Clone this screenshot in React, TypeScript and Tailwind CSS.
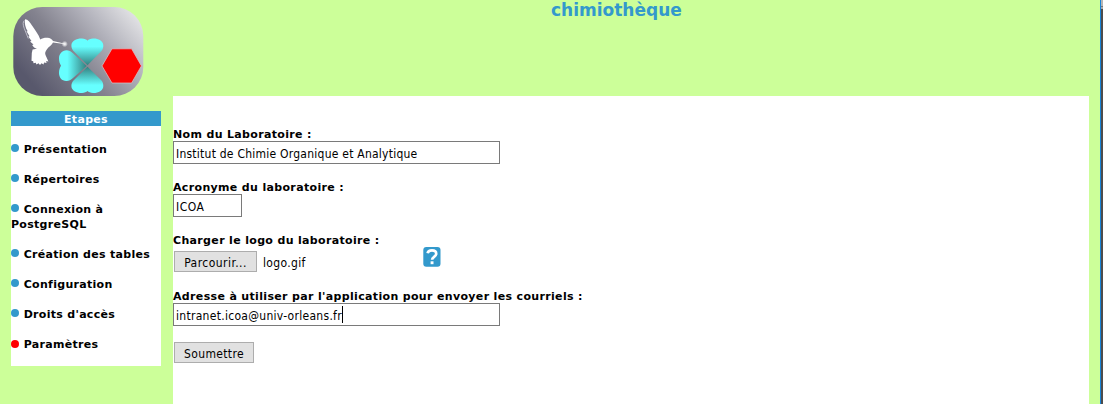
import React from "react";

const steps = [
  { label: "Présentation" },
  { label: "Répertoires" },
  { label: "Connexion à PostgreSQL" },
  { label: "Création des tables" },
  { label: "Configuration" },
  { label: "Droits d'accès" },
  { label: "Paramètres", active: true },
];

function Logo() {
  return (
    <svg className="block h-[91px] w-[132px]" viewBox="12 6 132 91">
      <defs>
        <linearGradient id="plate" gradientUnits="userSpaceOnUse" x1="36" y1="88" x2="128" y2="8">
          <stop offset="0" stopColor="#58586c" />
          <stop offset="0.4" stopColor="#84838f" />
          <stop offset="0.72" stopColor="#b4b4bd" />
          <stop offset="1" stopColor="#e0e0e3" />
        </linearGradient>
        <linearGradient id="leafTop" x1="0" y1="0" x2="0" y2="1">
          <stop offset="0.3" stopColor="#66ffff" />
          <stop offset="1" stopColor="#33807f" />
        </linearGradient>
        <linearGradient id="leafLeft" x1="0" y1="0" x2="1" y2="0">
          <stop offset="0.3" stopColor="#66ffff" />
          <stop offset="1" stopColor="#33807f" />
        </linearGradient>
        <linearGradient id="leafBottom" x1="0" y1="1" x2="0" y2="0">
          <stop offset="0.3" stopColor="#66ffff" />
          <stop offset="1" stopColor="#33807f" />
        </linearGradient>
        <radialGradient id="spark">
          <stop offset="0" stopColor="#fff" />
          <stop offset="0.4" stopColor="#fff" stopOpacity="0.7" />
          <stop offset="1" stopColor="#fff" stopOpacity="0" />
        </radialGradient>
      </defs>
      <rect x="13.300" y="7" width="130" height="89" rx="29" fill="url(#plate)" />
      <path
        d="M25 19.200C28 19.500 30 22 32 25.500 34.500 29.500 38.500 34 40.300 39.500 42 38.200 44.500 37.700 47.500 37.800 50 37.900 52 39.300 53 41L64 43.400 64 44 53 42.600C52 45 48.500 47 46.800 49.500 45.300 51.500 44.800 53 45.500 55L48.400 61.500 46.200 61 46.500 63 44 62.400 43.600 64.500 41.500 63.200 40 65 38.500 63.200 36.500 64.500 35.700 62.800 33.500 63.300 33.200 61.300 31.500 60.700 31.800 53 32.600 49.500 37 48.700C35 48.200 33 46.700 32.200 44.900L33.500 44.500 30 41.500 31.500 41 28.300 36.500 29.500 36.200 26.500 31.300 27.700 31.300C25.300 27.500 24.300 23 25 19.200Z"
        fill="#fff"
      />
      <path d="M24.300 20.500c-1.500 1.500-1.500 4 0 8l4 10" fill="none" stroke="#d0d0da" strokeWidth=".8" />
      <circle cx="64.700" cy="44" r="3.200" fill="url(#spark)" />
      <path d="M87.500 65.300L74 51.500C72.300 49.700 71.400 48 71.400 45.500 71.400 40.500 77 38.300 82 38.500c2.500.1 4.500.9 5.500 2.200 1-1.300 3-2.100 5.500-2.200 5-.2 10.300 2 10.300 7 0 2.500-.6 4.200-2.300 6Z" fill="url(#leafTop)" />
      <path d="M86.700 66L73 53.200C71 51.300 69 50.300 66.500 50.300c-4.500 0-7.500 3.700-7.500 8.200 0 3 .8 5 2 7.300-1.200 2-2 4.200-2 7.200 0 4.500 3 8.200 7.500 8 2.500-.1 4.500-1 6.500-2.900Z" fill="url(#leafLeft)" />
      <path d="M87.500 66.700L74 80C72.300 81.700 71.400 83.400 71.400 85.900 71.400 90.700 77 93.100 82 92.900c2.500-.1 4.500-.8 5.500-1.900 1 1.100 3 1.800 5.500 1.900 5 .2 10.300-2.200 10.300-7 0-2.500-.6-4.200-2.300-5.900Z" fill="url(#leafBottom)" />
      <path d="M112 48.800h19.600l9.800 17.100-9.800 17.100H112l-10-17.100Z" fill="#f00" stroke="#d8c5ca" strokeWidth=".7" />
    </svg>
  );
}

function HelpIcon() {
  return (
    <svg className="ml-[117px] h-[20px] w-[18px] shrink-0 self-start" viewBox="0 0 18 20">
      <rect x=".3" width="17.200" height="19.700" rx="3" fill="#3399cc" />
      <path d="M4.600 6.300C5 3.900 6.700 3.400 9 3.400c2.500 0 4.200 1.200 4.200 3.300 0 3.200-4.100 3-4.100 6" fill="none" stroke="#fff" strokeWidth="2.700" />
      <rect x="7.600" y="14.300" width="2.900" height="2.900" fill="#fff" />
    </svg>
  );
}

const control = "font-['DejaVu_Sans_Condensed','DejaVu_Sans',sans-serif] [font-stretch:condensed] text-[12px] whitespace-nowrap";
const label = "relative top-px block font-bold tracking-[0.34px]";

export default function App() {
  return (
    <div className="flex h-[404px] w-[1103px] overflow-hidden bg-[#ccff99] font-['DejaVu_Sans',Verdana,sans-serif] text-[11px] leading-[15px] text-black">
      <aside className="w-[173px] shrink-0 pt-[6px] pl-[11px]">
        <div className="pl-px"><Logo /></div>
        <nav className="mt-[14px] h-[255px] w-[150px] bg-white font-bold tracking-[0.3px]">
          <h2 className="h-[15px] bg-[#3399cc] pt-px text-center text-white">Etapes</h2>
          <ul className="flex flex-col gap-[15px] pt-[16px]">
            {steps.map((step) => (
              <li key={step.label}>
                <span className={`mr-[4.700px] inline-block size-[8px] rounded-full ${step.active ? "bg-[#ff0000] align-[0px]" : "bg-[#3399cc] align-[1px]"}`} />
                {step.label}
              </li>
            ))}
          </ul>
        </nav>
      </aside>
      <main className="flex w-[916px] shrink-0 flex-col">
        <h1 className="h-[96px] pl-[378px] text-[17px] leading-[20px] font-bold text-[#3399cc]">chimiothèque</h1>
        <form className="flex-1 bg-white pt-[30px]" onSubmit={(e) => e.preventDefault()}>
          <label className={label} htmlFor="name">Nom du Laboratoire :</label>
          <input id="name" className={`${control} block h-[23px] w-[327px] border border-[#7a7a7a] bg-white px-[2px] pt-[2px] tracking-[0.24px]`} defaultValue="Institut de Chimie Organique et Analytique" />
          <label className={`${label} mt-[15px]`} htmlFor="acronym">Acronyme du laboratoire :</label>
          <input id="acronym" className={`${control} block h-[23px] w-[69px] border border-[#7a7a7a] bg-white px-[2px] pt-[2px] tracking-[0.5px]`} defaultValue="ICOA" />
          <div className={`${label} mt-[15px]`}>Charger le logo du laboratoire :</div>
          <div className="flex h-[26px] pl-px">
            <button type="button" className={`${control} mt-[4px] h-[21px] w-[83px] shrink-0 border border-[#adadad] bg-[#e1e1e1] pt-[3px] tracking-[0.45px]`}>Parcourir...</button>
            <span className={`${control} mt-[9px] ml-[6px] w-[43px] tracking-[0.35px]`}>logo.gif</span>
            <HelpIcon />
          </div>
          <label className={`${label} mt-[15px]`} htmlFor="email">Adresse à utiliser par l'application pour envoyer les courriels :</label>
          <div className={`${control} flex h-[23px] w-[327px] items-center border border-[#7a7a7a] bg-white px-[2px] tracking-[0.29px]`}>
            <span id="email" className="pt-[3px]">intranet.icoa@univ-orleans.fr</span>
            <span className="h-[17px] w-px bg-black" />
          </div>
          <button type="submit" className={`${control} mt-[16px] ml-px block h-[21px] w-[80px] border border-[#adadad] bg-[#e1e1e1] pt-[3px] tracking-[0.35px]`}>Soumettre</button>
        </form>
      </main>
      <div className="ml-[11px] flex w-[3px] shrink-0">
        <div className="w-px bg-[#1883d7]" />
        <div className="flex flex-1 flex-col bg-[#4d4d4d]">
          <div className="h-[6px] bg-[#b5b5b5]" />
          <div className="h-px bg-[#777]" />
          <div className="h-[2px] bg-[#aaa]" />
        </div>
      </div>
    </div>
  );
}
